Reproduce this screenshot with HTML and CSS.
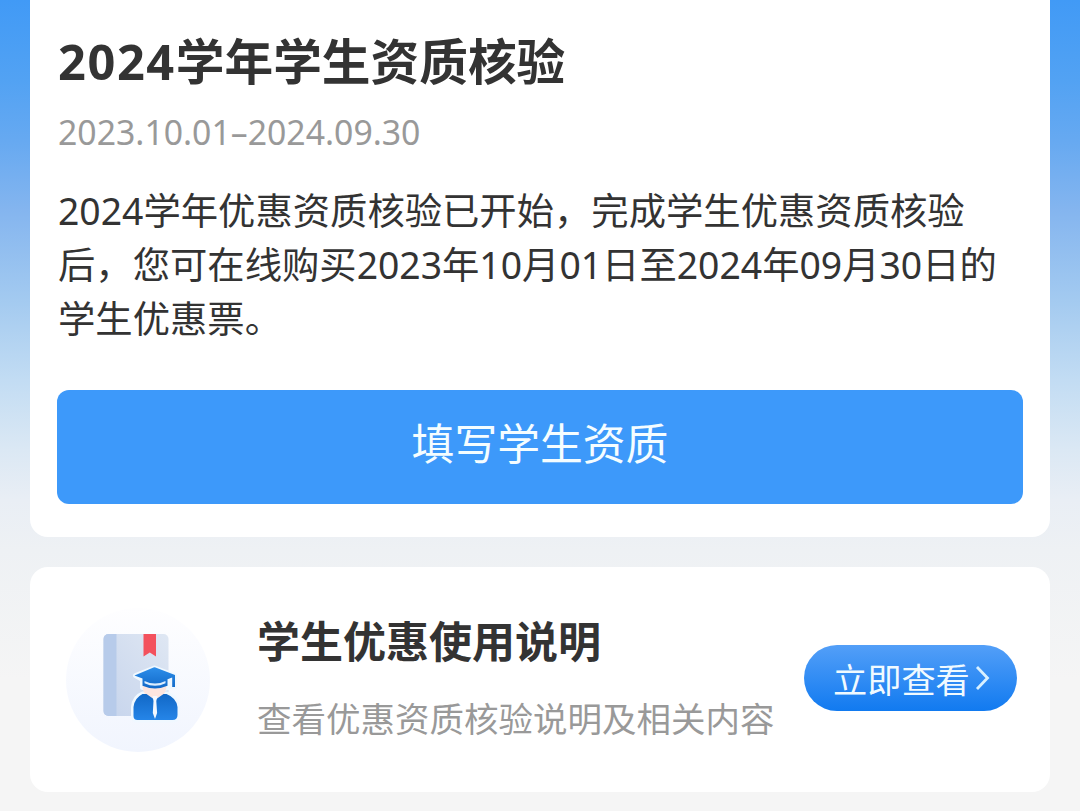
FILE: index.html
```html
<!DOCTYPE html>
<html lang="zh-CN">
<head>
<meta charset="UTF-8">
<meta name="viewport" content="width=device-width, initial-scale=1.0">
<title>学生资质核验</title>
<link rel="stylesheet" href="styles.css">
</head>
<body>
    <div class="page">
        <div class="card verify">
            <h1><span class="year">2024</span>学年学生资质核验</h1>
            <p class="date">2023.10.01–2024.09.30</p>
            <p class="text">2024学年优惠资质核验已开始，完成学生优惠资质核验<br>后，您可在线购买2023年10月01日至2024年09月30日的<br>学生优惠票。</p>
            <button type="button" class="fill-button">填写学生资质</button>
        </div>

        <div class="card guide">
            <svg class="guide-icon" width="150" height="150" viewBox="0 0 150 150">
                <defs>
                    <linearGradient id="circle" x1="0" y1="0" x2="0" y2="1">
                        <stop offset="0" stop-color="#fefeff"/>
                        <stop offset="1" stop-color="#f1f5fe"/>
                    </linearGradient>
                    <linearGradient id="book" x1="0" y1="1" x2="1" y2="0">
                        <stop offset="0" stop-color="#c6d4ec"/>
                        <stop offset="1" stop-color="#dfe7f3"/>
                    </linearGradient>
                    <linearGradient id="blue" x1="0" y1="0" x2="0" y2="1">
                        <stop offset="0" stop-color="#2d8eea"/>
                        <stop offset="1" stop-color="#1269c8"/>
                    </linearGradient>
                    <linearGradient id="body" x1="0" y1="0" x2="0" y2="1">
                        <stop offset="0" stop-color="#1268c6"/>
                        <stop offset="1" stop-color="#2585e8"/>
                    </linearGradient>
                </defs>
                <circle cx="76" cy="75" r="72" fill="url(#circle)"/>
                <g transform="translate(3.500 0)">
                    <!-- book -->
                    <rect x="38" y="29" width="65" height="82" rx="5" fill="url(#book)"/>
                    <path d="M43 29h8v82h-8a5 5 0 0 1-5-5V34a5 5 0 0 1 5-5z" fill="#b7cbea"/>
                    <path d="M78 29h12.500v22.500l-6.200-4-6.300 4z" fill="#f3515d"/>
                    <!-- student -->
                    <g stroke="#f0f8ff" stroke-width="5" stroke-linejoin="round" fill="#f0f8ff">
                        <path d="M70 70.500L89 63l20 7.500v11h-4v-7l-2 1v7c-7 3-18 3-26 0v-8z"/>
                        <path d="M68 112v-10q1-10 9-13h24q10 3 11 13v8q0 5-5 5H72q-4 0-4-3z"/>
                    </g>
                    <path d="M77 80h24c0 9-6 14-12 14S77 89 77 80z" fill="#fde5df"/>
                    <path d="M68 111v-9q1-9 9-13h4l8.500 6 8.500-6h3q10 4 11 13v8q0 5-5 5H72q-4 0-4-4z" fill="url(#body)"/>
                    <path d="M87 91h5l-1.200 5 .8 12-2.100 6-2.200-6 .7-12z" fill="#f3f8ff"/>
                    <path d="M69 70.500L88 62.500q1-.4 2 0l19.500 7.500v12h-2.800v-9.500l-4.700 1.800v6.500q-12.500 5.500-25 0v-7.300z" fill="url(#blue)"/>
                    <path d="M79 76q10.500 5 21 0v2.200q-10.500 5-21 0z" fill="#dceeff"/>
                </g>
            </svg>
            <div class="guide-info">
                <h2>学生优惠使用说明</h2>
                <p>查看优惠资质核验说明及相关内容</p>
            </div>
            <a class="view-button" href="#">立即查看<svg width="16" height="26" viewBox="0 0 16 26"><path d="M2 2l10.500 11L2 24" fill="none" stroke="#d8f0ff" stroke-width="2.800"/></svg></a>
        </div>
    </div>
</body>
</html>
```

FILE: styles.css
```css
* {
    box-sizing: border-box;
}

body {
    margin: 0;
    height: 811px;
    overflow: hidden;
    font-family: "Noto Sans", "Noto Sans CJK SC", sans-serif;
    color: #333;
    background: linear-gradient(#419af6 0, #52a2f3 80px, #66a9f1 140px, #84b5ef 210px, #a3caf0 300px, #c2dcf3 380px, #dbe8f4 450px, #e9eef5 500px, #eef1f4 550px, #f5f5f5 680px);
}

h1, h2, p {
    margin: 0;
    white-space: nowrap;
}

.page {
    display: flex;
    flex-direction: column;
    gap: 30px;
    padding: 0 30px;
}

.card {
    background-color: #fff;
    border-radius: 18px;
}

.verify {
    height: 537px;
    padding: 25px 27px 0 28px;
    border-radius: 0 0 18px 18px;
}

h1 {
    font-size: 48.7px;
    line-height: 72px;
    font-weight: bold;
}

.year {
    letter-spacing: 1.6px;
}

.date {
    margin-top: 8px;
    font-size: 33.8px;
    line-height: 54px;
    color: #999;
}

.text {
    margin-top: 25px;
    font-size: 37.35px;
    line-height: 54px;
}

.fill-button {
    display: block;
    width: 966px;
    height: 114px;
    margin: 44px 0 0 -1px;
    padding: 0 0 12px;
    border: none;
    border-radius: 12px;
    background-color: #3d99fa;
    color: #f5fdff;
    font-family: inherit;
    font-size: 42.8px;
}

.guide {
    display: flex;
    align-items: center;
    height: 225px;
    padding: 0 33px 0 32px;
}

.guide-icon {
    flex: none;
}

.guide-info {
    margin-left: 45px;
    padding-bottom: 3px;
    flex: 1;
}

h2 {
    font-size: 43px;
    line-height: 64px;
    font-weight: bold;
}

.guide-info p {
    margin-top: 18px;
    font-size: 34.5px;
    line-height: 54px;
    color: #999;
}

.view-button {
    display: flex;
    align-items: center;
    gap: 5px;
    flex: none;
    width: 213px;
    height: 66px;
    margin-bottom: 4px;
    padding-left: 29px;
    border-radius: 33px;
    background: linear-gradient(#539ff8, #117af0);
    color: #f0faff;
    font-size: 34.2px;
    text-decoration: none;
}
```
